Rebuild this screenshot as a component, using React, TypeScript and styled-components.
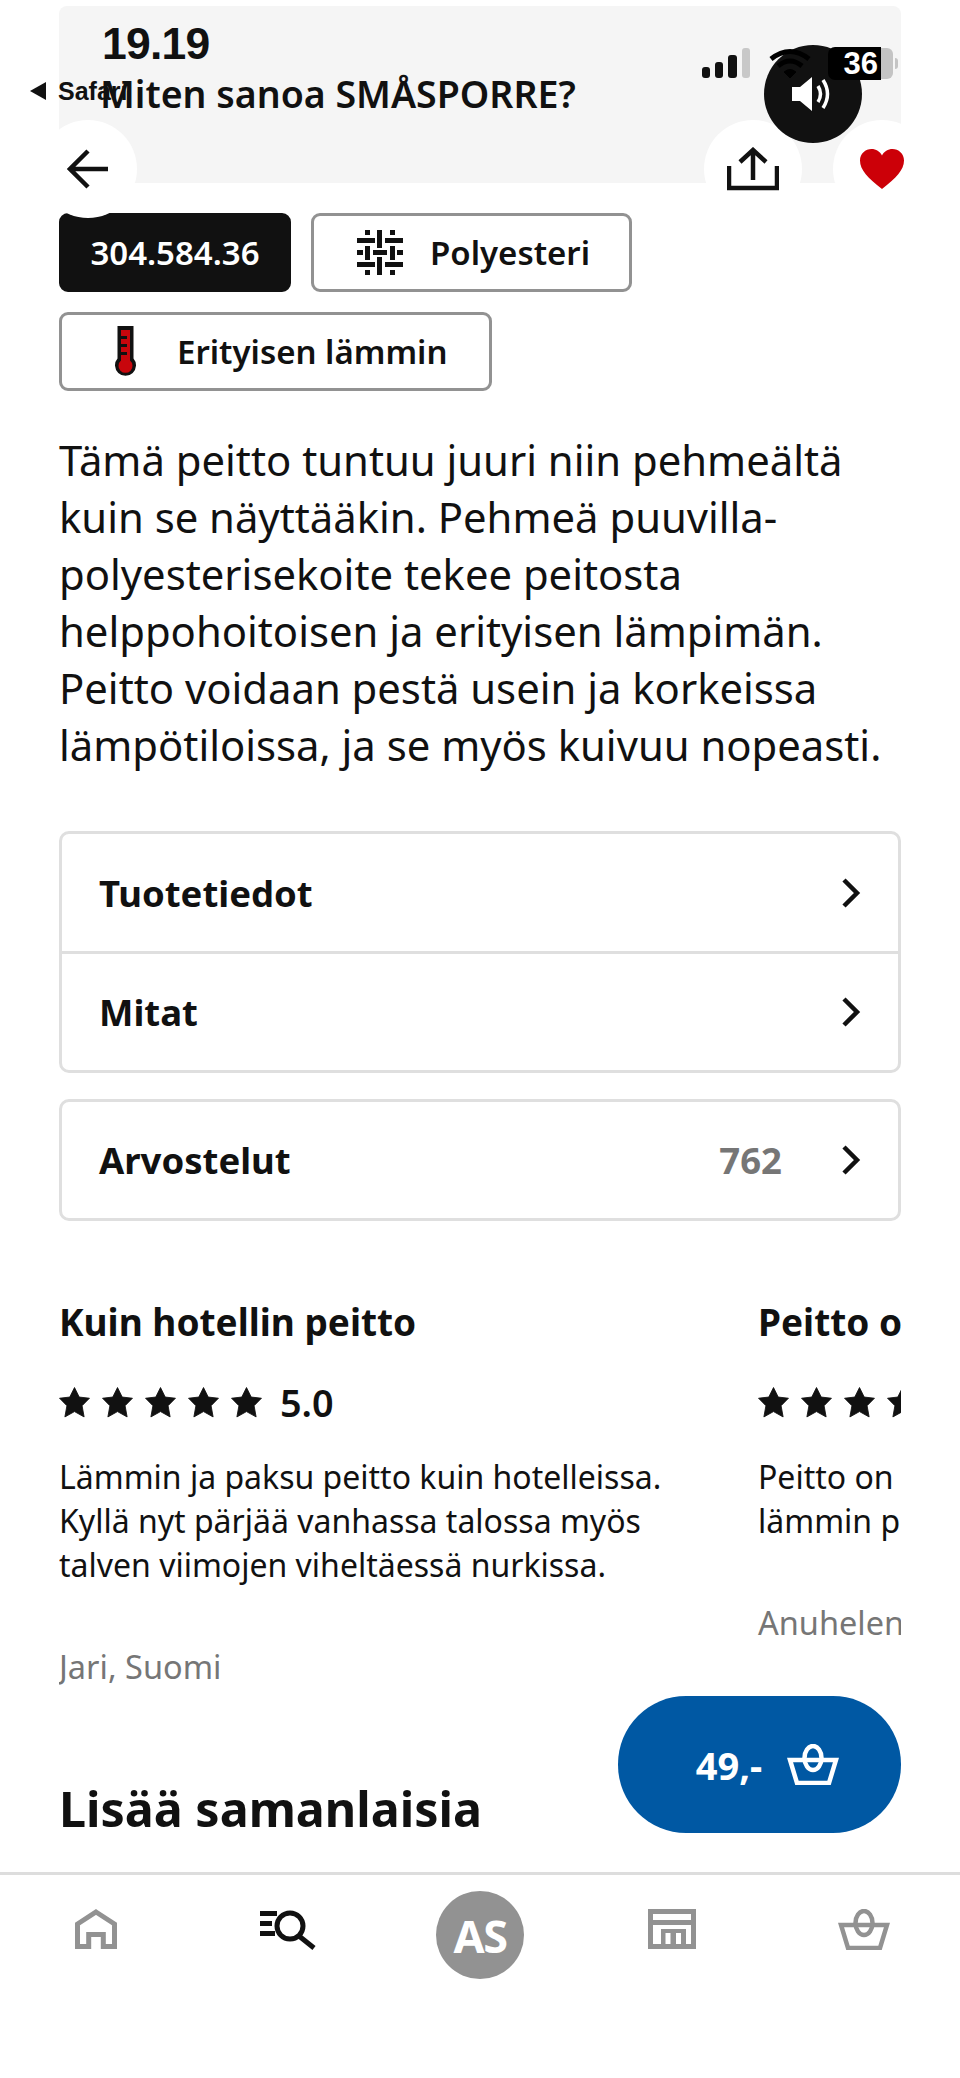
import React from 'react';
import styled, { createGlobalStyle } from 'styled-components';

const GlobalStyle = createGlobalStyle`
  html, body {
    margin: 0;
    padding: 0;
    background: #fff;
  }
  * {
    box-sizing: border-box;
  }
`;

const Page = styled.div`
  position: relative;
  width: 960px;
  height: 2078px;
  overflow: hidden;
  background: #fff;
  color: #111;
  font-family: "Noto Sans", "Open Sans", sans-serif;
  display: flex;
  flex-direction: column;
`;

const Content = styled.main`
  flex: 1;
  min-height: 0;
  overflow: hidden;
  padding: 6px 59px 0;
`;

const HeroBand = styled.div`
  height: 177px;
  background: #f5f5f5;
  border-radius: 8px 8px 0 0;
`;

const HeroOverlay = styled.div`
  position: absolute;
  top: 0;
  left: 0;
  width: 960px;
  height: 230px;
  pointer-events: none;
`;

const Clock = styled.div`
  position: absolute;
  left: 102px;
  top: 18px;
  font-family: "Liberation Sans", Arial, sans-serif;
  font-size: 44.5px;
  line-height: 52px;
  font-weight: 700;
  letter-spacing: -0.8px;
`;

const SafariBack = styled.div`
  position: absolute;
  left: 30px;
  top: 76px;
  display: flex;
  align-items: center;
  gap: 12px;
  font-family: "Liberation Sans", Arial, sans-serif;
  font-size: 25px;
  line-height: 30px;
  font-weight: 700;
`;

const Question = styled.div`
  position: absolute;
  left: 100px;
  top: 69px;
  font-size: 37.5px;
  line-height: 50px;
  font-weight: 600;
  white-space: nowrap;
`;

const RoundSlot = styled.div<{ $x: number }>`
  position: absolute;
  left: ${(p) => p.$x}px;
  top: 120px;
  width: 98px;
  height: 98px;
  border-radius: 50%;
  background: #fff;
  display: flex;
  align-items: center;
  justify-content: center;
`;

const SignalIcon = styled.svg`
  position: absolute;
  left: 702px;
  top: 48px;
`;

const WifiIcon = styled.svg`
  position: absolute;
  left: 769px;
  top: 47px;
`;

const SoundBubble = styled.div`
  position: absolute;
  left: 764px;
  top: 45px;
  width: 98px;
  height: 98px;
  border-radius: 50%;
  background: #111;
  display: flex;
  align-items: center;
  justify-content: center;
`;

const Battery = styled.div`
  position: absolute;
  left: 828px;
  top: 47px;
  width: 53px;
  height: 33px;
  border-radius: 7px 0 0 7px;
  background: #000;
  color: #fff;
  font-family: "Liberation Sans", Arial, sans-serif;
  font-size: 31px;
  line-height: 33px;
  font-weight: 700;
  text-align: right;
  padding-right: 3px;
`;

const BatteryRest = styled.div`
  position: absolute;
  left: 881px;
  top: 48px;
  width: 12px;
  height: 31px;
  border-radius: 0 6px 6px 0;
  background: #c4c4c4;
  &::after {
    content: '';
    position: absolute;
    left: 14px;
    top: 10px;
    width: 3px;
    height: 11px;
    border-radius: 0 3px 3px 0;
    background: #c4c4c4;
  }
`;

const ChipRow = styled.div`
  display: flex;
  flex-wrap: wrap;
  gap: 20px;
  margin-top: 30px;
  width: 600px;
`;

const Chip = styled.div<{ $dark?: boolean; $width: number; $inset?: number; $gap?: number }>`
  width: ${(p) => p.$width}px;
  height: 79px;
  border-radius: 9px;
  border: 3px solid ${(p) => (p.$dark ? '#111' : '#929292')};
  background: ${(p) => (p.$dark ? '#111' : '#fff')};
  color: ${(p) => (p.$dark ? '#fff' : '#111')};
  display: flex;
  align-items: center;
  justify-content: ${(p) => (p.$inset ? 'flex-start' : 'center')};
  padding-left: ${(p) => (p.$inset ? p.$inset - 3 : 0)}px;
  gap: ${(p) => p.$gap ?? 0}px;
  font-size: 33px;
  font-weight: 600;
  white-space: nowrap;
`;

const Description = styled.p`
  margin: 40px 0 58px;
  font-size: 41.8px;
  line-height: 57px;
  width: 842px;
`;

const Accordion = styled.div`
  border: 3px solid #dfdfdf;
  border-radius: 10px;
  & + & {
    margin-top: 26px;
  }
`;

const AccordionRow = styled.div<{ $height: number }>`
  height: ${(p) => p.$height}px;
  display: flex;
  align-items: center;
  padding: 0 37px;
  font-size: 36.5px;
  font-weight: 700;
  & + & {
    border-top: 3px solid #dfdfdf;
  }
`;

const RowLabel = styled.span`
  flex: 1;
`;

const RowCount = styled.span`
  color: #767676;
  margin-right: 59px;
`;

const ReviewStrip = styled.div`
  display: flex;
  gap: 83px;
  margin-top: 77px;
  overflow: hidden;
  align-items: flex-start;
`;

const Review = styled.article`
  flex: 0 0 616px;
`;

const ReviewTitle = styled.h3`
  margin: 0;
  font-size: 37px;
  line-height: 48px;
  font-weight: 700;
  white-space: nowrap;
`;

const RatingRow = styled.div`
  display: flex;
  align-items: center;
  gap: 12px;
  height: 48px;
  margin-top: 32px;
  font-size: 37.8px;
  font-weight: 600;
`;

const StarSvg = styled.svg`
  flex: none;
  width: 31px;
  height: 31px;
`;

const Score = styled.span`
  margin-left: 6px;
`;

const ReviewText = styled.p`
  margin: 29px 0 0;
  font-size: 32px;
  line-height: 44px;
  white-space: nowrap;
`;

const Author = styled.div`
  margin-top: 58px;
  font-size: 32.5px;
  line-height: 44px;
  color: #767676;
`;

const SectionTitle = styled.h2`
  margin: 88px 0 0;
  font-size: 48.4px;
  line-height: 62px;
  font-weight: 700;
`;

const BuyButton = styled.div`
  position: absolute;
  left: 618px;
  top: 1696px;
  width: 283px;
  height: 137px;
  border-radius: 68px;
  background: #0058a3;
  color: #fff;
  display: flex;
  align-items: center;
  justify-content: center;
  gap: 25px;
  padding-left: 16px;
  font-size: 38px;
  font-weight: 700;
`;

const BottomNav = styled.nav`
  flex: none;
  height: 206px;
  border-top: 3px solid #ddd;
  display: grid;
  grid-template-columns: repeat(5, 1fr);
  padding-top: 16px;
  align-items: start;
  justify-items: center;
`;

const NavSlot = styled.div<{ $lift?: boolean }>`
  height: 88px;
  display: flex;
  align-items: center;
  justify-content: center;
  padding-bottom: ${(p) => (p.$lift ? 12 : 0)}px;
`;

const Avatar = styled.div`
  width: 88px;
  height: 88px;
  border-radius: 50%;
  background: #929292;
  color: #fff;
  display: flex;
  align-items: center;
  justify-content: center;
  font-size: 45px;
  font-weight: 700;
  letter-spacing: -1.5px;
`;

const Star = ({ half }: { half?: boolean }) => (
  <StarSvg viewBox="0 0 29 29" fill="#111" stroke="#111" strokeWidth="0.8" strokeLinejoin="round">
    {half ? (
      <path d="M14.500 0.500V23L5.500 28 7.400 17.500 0.500 10.500 10.100 9.400z" />
    ) : (
      <path d="M14.500 0.500L18.900 9.400 28.500 10.500 21.600 17.500 23.500 28 14.500 23 5.500 28 7.400 17.500 0.500 10.500 10.100 9.400z" />
    )}
  </StarSvg>
);

const Weave = () => (
  <svg width="46" height="45" viewBox="0 0 46 45" fill="#111">
    <path d="M8 0h5v5H8zM33 0h5v5h-5zM20 0h5v18h-5z" />
    <path d="M0 8h18v5H0zM28 8h18v5H28z" />
    <path d="M0 20h6v5H0zM40 20h6v5h-6zM8 16h5v14H8zM33 16h5v14h-5zM16 20h14v5H16z" />
    <path d="M0 32h18v5H0zM28 32h18v5H28z" />
    <path d="M20 27h5v18h-5zM8 40h5v5H8zM33 40h5v5h-5z" />
  </svg>
);

const Thermometer = () => (
  <svg width="21" height="52" viewBox="0 0 21 52">
    <path d="M2.500 0h16v32.500a10.500 10.500 0 1 1-16 0z" fill="#111" />
    <path d="M6 4h9v30.500a7 7 0 1 1-9 0z" fill="#c8060c" />
    <path d="M6 10h6v3H6zM6 18h6v3H6zM6 26h6v3H6z" fill="#111" />
  </svg>
);

const Chevron = () => (
  <svg width="20" height="30" viewBox="0 0 20 30" fill="none" stroke="#111" strokeWidth="4.500">
    <path d="M3 2l13 13L3 28" />
  </svg>
);

const BasketIcon = ({ color }: { color: string }) => (
  <svg width="52" height="41" viewBox="0 0 52 41" fill="none" stroke={color} strokeWidth="4.500">
    <path d="M3 16h46l-7 23H10z" />
    <ellipse cx="26" cy="14" rx="8.500" ry="12" />
  </svg>
);

const App = () => {
  return (
    <Page>
      <GlobalStyle />
      <Content>
        <HeroBand />
        <ChipRow>
          <Chip $dark $width={232}>304.584.36</Chip>
          <Chip $width={321} $inset={46} $gap={27}>
            <Weave />
            Polyesteri
          </Chip>
          <Chip $width={433} $inset={56} $gap={41}>
            <Thermometer />
            Erityisen lämmin
          </Chip>
        </ChipRow>
        <Description>
          Tämä peitto tuntuu juuri niin pehmeältä kuin se näyttääkin. Pehmeä puuvilla-polyesterisekoite tekee peitosta
          helppohoitoisen ja erityisen lämpimän. Peitto voidaan pestä usein ja korkeissa lämpötiloissa, ja se myös kuivuu
          nopeasti.
        </Description>
        <Accordion>
          <AccordionRow $height={117}>
            <RowLabel>Tuotetiedot</RowLabel>
            <Chevron />
          </AccordionRow>
          <AccordionRow $height={119}>
            <RowLabel>Mitat</RowLabel>
            <Chevron />
          </AccordionRow>
        </Accordion>
        <Accordion>
          <AccordionRow $height={116}>
            <RowLabel>Arvostelut</RowLabel>
            <RowCount>762</RowCount>
            <Chevron />
          </AccordionRow>
        </Accordion>
        <ReviewStrip>
          <Review>
            <ReviewTitle>Kuin hotellin peitto</ReviewTitle>
            <RatingRow>
              <Star />
              <Star />
              <Star />
              <Star />
              <Star />
              <Score>5.0</Score>
            </RatingRow>
            <ReviewText>
              Lämmin ja paksu peitto kuin hotelleissa.
              <br />
              Kyllä nyt pärjää vanhassa talossa myös
              <br />
              talven viimojen viheltäessä nurkissa.
            </ReviewText>
            <Author>Jari, Suomi</Author>
          </Review>
          <Review>
            <ReviewTitle>Peitto o</ReviewTitle>
            <RatingRow>
              <Star />
              <Star />
              <Star />
              <Star half />
            </RatingRow>
            <ReviewText>
              Peitto on
              <br />
              lämmin p
            </ReviewText>
            <Author>Anuhelen</Author>
          </Review>
        </ReviewStrip>
        <SectionTitle>Lisää samanlaisia</SectionTitle>
      </Content>

      <HeroOverlay>
        <RoundSlot $x={39}>
          <svg width="42" height="40" viewBox="0 0 42 40" fill="none" stroke="#111" strokeWidth="4.500">
            <path d="M41 20H4M21 2L3 20l18 18" />
          </svg>
        </RoundSlot>
        <RoundSlot $x={704}>
          <svg width="52" height="44" viewBox="0 0 52 44" fill="none" stroke="#111" strokeWidth="4.500">
            <path d="M26 33V4M13 15L26 3l13 12M2 19v22h48V19" />
          </svg>
        </RoundSlot>
        <RoundSlot $x={833}>
          <svg width="44" height="40" viewBox="0 0 44 40" fill="#cc0008">
            <path d="M22 40C8 29 0 21 0 11.500 0 4.500 5.500 0 11.500 0 16 0 20 2.500 22 6.500 24 2.500 28 0 32.500 0 38.500 0 44 4.500 44 11.500 44 21 36 29 22 40z" />
          </svg>
        </RoundSlot>
        <Clock>19.19</Clock>
        <SafariBack>
          <svg width="16" height="18" viewBox="0 0 16 18" fill="#111">
            <path d="M0 9L16 0v18z" />
          </svg>
          Safari
        </SafariBack>
        <Question>Miten sanoa SMÅSPORRE?</Question>
        <SignalIcon width="48" height="30" viewBox="0 0 48 30">
          <rect x="0" y="19" width="8" height="11" rx="3" fill="#111" />
          <rect x="13" y="14" width="8" height="16" rx="3" fill="#111" />
          <rect x="26" y="7" width="9" height="23" rx="3" fill="#111" />
          <rect x="40" y="0" width="8" height="30" rx="3" fill="#c8c8c8" />
        </SignalIcon>
        <SoundBubble>
          <svg width="42" height="34" viewBox="0 0 42 34" fill="#fff">
            <path d="M0 10h8L20 0v34L8 24H0z" />
            <path d="M26 9q5 8 0 16" fill="none" stroke="#fff" strokeWidth="3.500" />
            <path d="M31 3q9 14 0 28" fill="none" stroke="#fff" strokeWidth="3.500" />
          </svg>
        </SoundBubble>
        <WifiIcon width="44" height="34" viewBox="0 0 44 34" fill="none" stroke="#000" strokeWidth="5">
          <path d="M2 12q19-15 38 0" />
          <path d="M9 19q12-10 24 0" />
          <path d="M21 31l-6-6q6-5 12 0z" fill="#000" strokeWidth="1" />
        </WifiIcon>
        <BatteryRest />
        <Battery>36</Battery>
      </HeroOverlay>

      <BuyButton>
        49,-
        <BasketIcon color="#fff" />
      </BuyButton>

      <BottomNav>
        <NavSlot $lift>
          <svg width="42" height="40" viewBox="0 0 42 40" fill="none" stroke="#929292" strokeWidth="5">
            <path d="M21 3L39.500 15V37.500H28.300V25.500H13.700V37.500H2.500V15z" />
          </svg>
        </NavSlot>
        <NavSlot $lift>
          <svg width="56" height="42" viewBox="0 0 56 42" fill="none" stroke="#111" strokeWidth="5">
            <path d="M0 5.500h17M0 15.500h12M0 25.500h15" />
            <circle cx="30" cy="18" r="13" />
            <path d="M39 28l15 12" />
          </svg>
        </NavSlot>
        <NavSlot>
          <Avatar>AS</Avatar>
        </NavSlot>
        <NavSlot $lift>
          <svg width="48" height="40" viewBox="0 0 48 40" fill="#929292">
            <path
              fillRule="evenodd"
              d="M0 0h48v40H0zM5 5v6h38V5zM5 16v19h8V20h25v15h5V16zM17.500 24v11h5V24zM28 24v11h5V24z"
            />
          </svg>
        </NavSlot>
        <NavSlot $lift>
          <BasketIcon color="#929292" />
        </NavSlot>
      </BottomNav>
    </Page>
  );
};

export default App;
